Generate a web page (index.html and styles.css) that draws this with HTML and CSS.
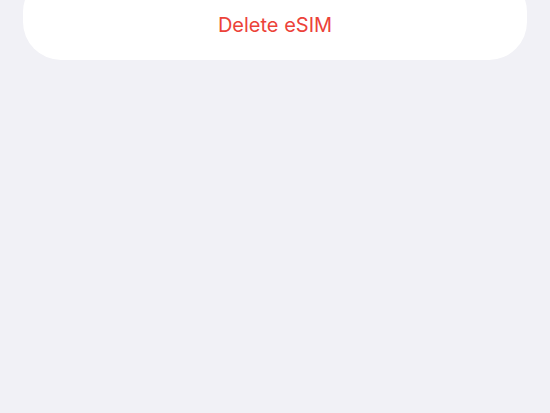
FILE: index.html
```html
<!DOCTYPE html>
<html>
<head>
    <title>eSIM</title>
    <link rel="stylesheet" href="styles.css">
</head>
<body>
    <div class="settings-group">
        <div class="action-row">Delete eSIM</div>
    </div>
</body>
</html>
```

FILE: styles.css
```css
body {
    margin: 0;
    background-color: #f1f1f6;
    font-family: Inter, "Noto Sans", sans-serif;
    height: 413px;
    overflow: hidden;
}

.settings-group {
    background-color: #ffffff;
    margin: -26px 23px 0;
    padding: 27px 0 10px;
    border-radius: 38px;
}

.action-row {
    height: 49px;
    line-height: 49px;
    text-align: center;
    color: #ec4239;
    font-size: 20px;
}
```
